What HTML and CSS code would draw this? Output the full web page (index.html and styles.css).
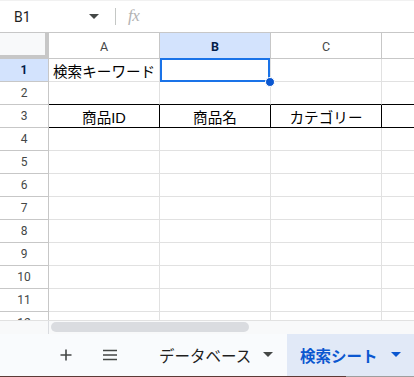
FILE: index.html
```html
<!DOCTYPE html>
<html lang="ja">
<head>
<meta charset="utf-8">
<link rel="stylesheet" href="styles.css">
</head>
<body>
<div class="app">
  <div class="formula-bar">
    <div class="name-box">
      <span class="name-text">B1</span>
      <svg class="caret" width="10" height="6" viewBox="0 0 10 6"><path d="M0 0h10L5 5z" fill="#444746"/></svg>
    </div>
    <div class="sep"></div>
    <span class="fx">fx</span>
  </div>

  <div class="grid">
    <div class="corner"></div>
    <div class="colhead">A</div>
    <div class="colhead sel">B</div>
    <div class="colhead">C</div>
    <div class="colhead last"></div>

    <div class="rowhead sel">1</div>
    <div class="cell text-left">検索キーワード</div>
    <div class="cell active"><div class="selection"></div><div class="handle"></div></div>
    <div class="cell"></div>
    <div class="cell last"></div>

    <div class="rowhead">2</div>
    <div class="cell bb"></div>
    <div class="cell bb"></div>
    <div class="cell bb"></div>
    <div class="cell last bb"></div>

    <div class="rowhead">3</div>
    <div class="cell bb br center">商品ID</div>
    <div class="cell bb br center">商品名</div>
    <div class="cell bb br center">カテゴリー</div>
    <div class="cell last bb"></div>

    <div class="rowhead">4</div><div class="cell"></div><div class="cell"></div><div class="cell"></div><div class="cell last"></div>
    <div class="rowhead">5</div><div class="cell"></div><div class="cell"></div><div class="cell"></div><div class="cell last"></div>
    <div class="rowhead">6</div><div class="cell"></div><div class="cell"></div><div class="cell"></div><div class="cell last"></div>
    <div class="rowhead">7</div><div class="cell"></div><div class="cell"></div><div class="cell"></div><div class="cell last"></div>
    <div class="rowhead">8</div><div class="cell"></div><div class="cell"></div><div class="cell"></div><div class="cell last"></div>
    <div class="rowhead">9</div><div class="cell"></div><div class="cell"></div><div class="cell"></div><div class="cell last"></div>
    <div class="rowhead">10</div><div class="cell"></div><div class="cell"></div><div class="cell"></div><div class="cell last"></div>
    <div class="rowhead">11</div><div class="cell"></div><div class="cell"></div><div class="cell"></div><div class="cell last"></div>
    <div class="rowhead">12</div><div class="cell"></div><div class="cell"></div><div class="cell"></div><div class="cell last"></div>
  </div>

  <div class="hscroll">
    <div class="hscroll-left"></div>
    <div class="hscroll-track"><div class="thumb"></div></div>
  </div>

  <div class="tabbar">
    <div class="icon-btn plus">
      <svg width="14" height="14" viewBox="0 0 14 14"><path d="M7 1.5v11M1.5 7h11" stroke="#444746" stroke-width="1.6"/></svg>
    </div>
    <div class="icon-btn menu">
      <svg width="16" height="12" viewBox="0 0 16 12"><path d="M1 1.5h14M1 6h14M1 10.5h14" stroke="#444746" stroke-width="1.6"/></svg>
    </div>
    <div class="tab db-tab">
      <span class="tab-label">データベース</span>
      <svg class="tab-caret" width="10" height="6" viewBox="0 0 10 6"><path d="M0 0h10L5 5z" fill="#444746"/></svg>
    </div>
    <div class="tab active-tab">
      <span class="tab-label">検索シート</span>
      <svg class="tab-caret" width="10" height="6" viewBox="0 0 10 6"><path d="M0 0h10L5 5z" fill="#0b57d0"/></svg>
    </div>
  </div>
</div>
</body>
</html>
```

FILE: styles.css
```css
* { box-sizing: border-box; }
html, body { margin: 0; padding: 0; background: #ffffff; }
.app {
  width: 414px;
  height: 377px;
  overflow: hidden;
  display: flex;
  flex-direction: column;
  font-family: Roboto, "Noto Sans CJK JP", sans-serif;
  color: #1f1f1f;
}

/* formula bar */
.formula-bar {
  height: 33px;
  flex: none;
  display: flex;
  align-items: center;
  border-bottom: 1px solid #c7c7c7;
  border-top: 1px solid #f1f1f1;
}
.name-box {
  width: 107px;
  display: flex;
  align-items: center;
  justify-content: space-between;
  padding: 0 8px 0 14px;
}
.name-text { font-size: 14px; color: #1f1f1f; }
.caret { margin-top: 1px; }
.sep {
  width: 1px;
  height: 17px;
  background: #c4c7c5;
  margin-left: 8px;
}
.fx {
  margin-left: 12px;
  font-family: "Liberation Serif", "DejaVu Serif", serif;
  font-style: italic;
  font-size: 17px;
  color: #b3b3b3;
  letter-spacing: -0.5px;
  margin-top: -2px;
}

/* grid */
.grid {
  height: 287px;
  flex: none;
  overflow: hidden;
  display: grid;
  grid-template-columns: 49px 111px 111px 111px 1fr;
  grid-template-rows: 26px repeat(12, 23px);
}
.corner {
  background: #f8f9fa;
  border-right: 4px solid #c7c7c7;
  border-bottom: 4px solid #c7c7c7;
}
.colhead {
  display: flex;
  align-items: center;
  justify-content: center;
  font-size: 12.5px;
  color: #444746;
  border-right: 1px solid #c7c7c7;
  border-bottom: 1px solid #c7c7c7;
  padding-top: 1px;
}
.colhead.sel {
  background: #d3e3fd;
  color: #041e49;
  font-weight: 700;
}
.colhead.last { border-right: none; }
.rowhead {
  display: flex;
  align-items: center;
  justify-content: center;
  font-size: 12px;
  color: #444746;
  border-right: 1px solid #c7c7c7;
  border-bottom: 1px solid #c7c7c7;
}
.rowhead.sel {
  background: #d3e3fd;
  color: #041e49;
  font-weight: 700;
}
.cell {
  position: relative;
  display: flex;
  align-items: center;
  font-family: "Liberation Sans", "Noto Sans CJK JP", sans-serif;
  font-size: 14.6px;
  color: #000000;
  border-right: 1px solid #e1e1e1;
  border-bottom: 1px solid #e1e1e1;
  white-space: nowrap;
}
.cell.last { border-right: none; }
.cell.text-left { padding-left: 4px; }
.cell.center { justify-content: center; }
.cell.bb { border-bottom-color: #000000; }
.cell.br { border-right-color: #000000; }

.selection {
  position: absolute;
  left: 0;
  top: -1px;
  width: 110px;
  height: 24px;
  border: 2px solid #1a73e8;
  z-index: 2;
}
.handle {
  position: absolute;
  left: 105px;
  top: 18px;
  width: 10px;
  height: 10px;
  border-radius: 50%;
  background: #0b57d0;
  border: 1px solid #ffffff;
  z-index: 3;
}

/* horizontal scroll */
.hscroll {
  height: 14px;
  flex: none;
  display: flex;
  border-top: 1px solid #e1e1e1;
  background: #f8f9fa;
}
.hscroll-left {
  width: 49px;
  border-right: 1px solid #dadce0;
}
.hscroll-track {
  flex: 1;
  padding: 1px 0 2px 2px;
}
.thumb {
  width: 198px;
  height: 10px;
  border-radius: 5px;
  background: #dadce0;
}

/* tab bar */
.tabbar {
  height: 43px;
  flex: none;
  display: flex;
  align-items: stretch;
  background: #f9fbfd;
  border-bottom: 1px solid;
  border-image: linear-gradient(to right, #5c3a36 0, #5c3a36 345px, #9e9e9e 345px) 1;
}
.icon-btn {
  display: flex;
  align-items: center;
  justify-content: center;
  width: 24px;
}
.plus { margin-left: 54px; }
.menu { margin-left: 20px; }
.tab {
  display: flex;
  align-items: center;
  font-size: 15.5px;
  color: #1f1f1f;
}
.tab .tab-label { font-family: Roboto, "Noto Sans CJK JP", sans-serif; }
.db-tab {
  width: 165px;
  padding-left: 37px;
}
.db-tab .tab-caret { margin-left: 12px; }
.active-tab {
  flex: 1;
  padding-left: 13px;
  background: #e1e9f7;
  color: #0b57d0;
  font-weight: 700;
}
.active-tab .tab-caret { margin-left: 13px; }
```
